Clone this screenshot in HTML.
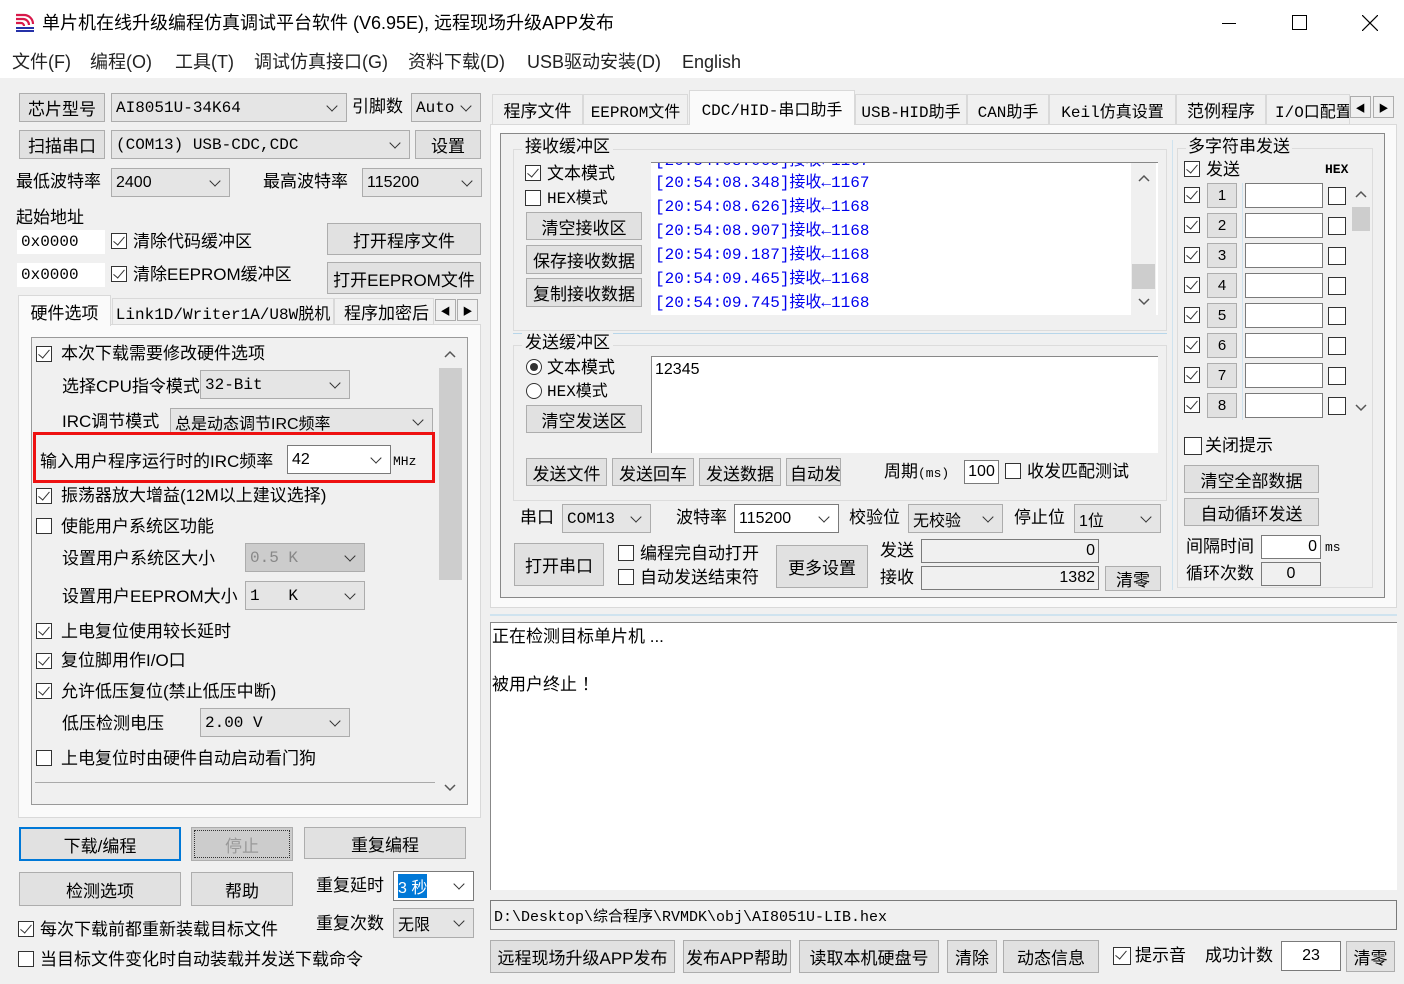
<!DOCTYPE html>
<html><head><meta charset="utf-8">
<style>
*{margin:0;padding:0;box-sizing:border-box}
body{width:1404px;height:984px;background:#f0f0f0;position:relative;overflow:hidden;font-family:"Liberation Sans","Noto Sans CJK SC",sans-serif;font-size:17px;color:#000}
.a{position:absolute}
.t{position:absolute;line-height:24px;white-space:nowrap}
.b{position:absolute;background:#e1e1e1;border:1px solid #adadad;display:flex;align-items:center;justify-content:center;white-space:nowrap}
.c{position:absolute;background:#e5e5e5;border:1px solid #acacac;display:flex;align-items:center;padding-left:4px;white-space:nowrap;font-size:16px}
.c::after{content:"";position:absolute;right:10px;top:50%;margin-top:-6px;width:7px;height:7px;border-right:1.5px solid #333;border-bottom:1.5px solid #333;transform:rotate(45deg)}
.w{background:#fff;border-color:#7a7a7a}
.e{position:absolute;background:#fff;border:1px solid #7a7a7a;display:flex;align-items:center;padding:0 3px;white-space:nowrap;font-size:16px}
.cb{position:absolute;width:16px;height:16px;background:#fff;border:1px solid #333}
.cb.k::after{content:"";position:absolute;left:4px;top:0px;width:5px;height:10px;border-right:1.5px solid #333;border-bottom:1.5px solid #333;transform:rotate(40deg)}
.rd{position:absolute;width:16px;height:16px;border-radius:50%;background:#fff;border:1px solid #333}
.m{font-family:"Liberation Mono","Noto Sans CJK SC",monospace}
.blue{color:#0000ee}
.tab{position:absolute;background:#f0f0f0;border:1px solid #d9d9d9;display:flex;align-items:center;justify-content:center;white-space:nowrap}
.grp{position:absolute;border:1px solid #dcdcdc}
</style></head><body>
<!-- title -->
<div class="a" style="left:0;top:0;width:1404px;height:47px;background:#fff"></div>
<svg class="a" style="left:14px;top:12px" width="24" height="22" viewBox="0 0 24 22"><path d="M2 3h8a9 9 0 0 1 9 9M2 7h7a6 6 0 0 1 6 6M2 11h5a3 3 0 0 1 3 3" stroke="#d8194a" stroke-width="2.2" fill="none"/><path d="M2 16h18M2 19h18" stroke="#2531a8" stroke-width="2"/></svg>
<div class="t" style="left:42px;top:11px;font-size:18px">单片机在线升级编程仿真调试平台软件 (V6.95E), 远程现场升级APP发布</div>
<div class="a" style="left:1222px;top:23px;width:14px;height:1px;background:#000"></div>
<div class="a" style="left:1292px;top:15px;width:15px;height:15px;border:1px solid #000"></div>
<svg class="a" style="left:1362px;top:15px" width="16" height="16"><path d="M0 0L16 16M16 0L0 16" stroke="#000" stroke-width="1.2"/></svg>
<!-- menu -->
<div class="a" style="left:0;top:47px;width:1404px;height:31px;background:#fff"></div>
<div class="t" style="left:12px;top:50px;font-size:18px;color:#222">文件(F)</div>
<div class="t" style="left:90px;top:50px;font-size:18px;color:#222">编程(O)</div>
<div class="t" style="left:175px;top:50px;font-size:18px;color:#222">工具(T)</div>
<div class="t" style="left:254px;top:50px;font-size:18px;color:#222">调试仿真接口(G)</div>
<div class="t" style="left:408px;top:50px;font-size:18px;color:#222">资料下载(D)</div>
<div class="t" style="left:527px;top:50px;font-size:18px;color:#222">USB驱动安装(D)</div>
<div class="t" style="left:682px;top:50px;font-size:18px;color:#222">English</div>

<!-- left top -->
<div class="b" style="left:19px;top:93px;width:86px;height:29px">芯片型号</div>
<div class="c m" style="left:111px;top:93px;width:236px;height:29px">AI8051U-34K64</div>
<div class="t" style="left:352px;top:95px">引脚数</div>
<div class="c m" style="left:411px;top:93px;width:70px;height:29px">Auto</div>
<div class="b" style="left:19px;top:130px;width:86px;height:29px">扫描串口</div>
<div class="c m" style="left:111px;top:130px;width:299px;height:29px">(COM13) USB-CDC,CDC</div>
<div class="b" style="left:415px;top:130px;width:66px;height:29px">设置</div>
<div class="t" style="left:16px;top:170px">最低波特率</div>
<div class="c" style="left:111px;top:168px;width:119px;height:29px">2400</div>
<div class="t" style="left:263px;top:170px">最高波特率</div>
<div class="c" style="left:362px;top:168px;width:120px;height:29px">115200</div>
<div class="t" style="left:16px;top:206px">起始地址</div>
<div class="e m" style="left:17px;top:230px;width:88px;height:24px;border-color:#fff">0x0000</div>
<div class="cb k" style="left:111px;top:233px"></div><div class="t" style="left:133px;top:230px">清除代码缓冲区</div>
<div class="b" style="left:327px;top:223px;width:154px;height:32px">打开程序文件</div>
<div class="e m" style="left:17px;top:263px;width:88px;height:24px;border-color:#fff">0x0000</div>
<div class="cb k" style="left:111px;top:266px"></div><div class="t" style="left:133px;top:263px">清除EEPROM缓冲区</div>
<div class="b" style="left:327px;top:262px;width:154px;height:32px">打开EEPROM文件</div>
<!-- left tabs -->
<div class="a" style="left:18px;top:324px;width:463px;height:494px;background:#fafafa;border:1px solid #d9d9d9"></div>
<div class="tab" style="left:18px;top:295px;width:93px;height:31px;background:#fafafa;border-bottom:none">硬件选项</div>
<div class="tab m" style="left:112px;top:298px;width:222px;height:27px;font-size:16px">Link1D/Writer1A/U8W脱机</div>
<div class="tab" style="left:334px;top:298px;width:100px;height:27px;justify-content:flex-start;padding-left:9px;overflow:hidden">程序加密后</div>
<div class="b" style="left:435px;top:299px;width:21px;height:22px;font-size:10px;background:#f0f0f0">◀</div>
<div class="b" style="left:457px;top:299px;width:21px;height:22px;font-size:10px;background:#f0f0f0">▶</div>
<div class="a" style="left:31px;top:337px;width:437px;height:468px;border:1px solid #999;background:#f0f0f0"></div>
<div class="a" style="left:439px;top:368px;width:23px;height:212px;background:#cdcdcd"></div>
<svg class="a" style="left:443px;top:349px" width="14" height="10"><path d="M2 8L7 3L12 8" stroke="#555" stroke-width="1.5" fill="none"/></svg>
<svg class="a" style="left:443px;top:783px" width="14" height="10"><path d="M2 2L7 7L12 2" stroke="#555" stroke-width="1.5" fill="none"/></svg>
<div class="cb k" style="left:36px;top:346px"></div><div class="t" style="left:61px;top:342px">本次下载需要修改硬件选项</div>
<div class="t" style="left:62px;top:375px">选择CPU指令模式</div>
<div class="c m" style="left:200px;top:370px;width:150px;height:29px">32-Bit</div>
<div class="t" style="left:62px;top:410px;height:22px;overflow:hidden">IRC调节模式</div>
<div class="c" style="left:170px;top:408px;width:263px;height:27px;overflow:hidden">总是动态调节IRC频率</div>
<div class="a" style="left:33px;top:432px;width:402px;height:51px;border:3px solid #ee1111;background:#f0f0f0"></div>
<div class="t" style="left:40px;top:450px">输入用户程序运行时的IRC频率</div>
<div class="c w" style="left:287px;top:445px;width:104px;height:29px">42</div>
<div class="t m" style="left:393px;top:450px;font-size:13px">MHz</div>
<div class="cb k" style="left:36px;top:488px"></div><div class="t" style="left:61px;top:484px">振荡器放大增益(12M以上建议选择)</div>
<div class="cb" style="left:36px;top:518px"></div><div class="t" style="left:61px;top:515px">使能用户系统区功能</div>
<div class="t" style="left:62px;top:547px">设置用户系统区大小</div>
<div class="c m" style="left:245px;top:543px;width:120px;height:29px;background:#ccc;color:#888">0.5 K</div>
<div class="t" style="left:62px;top:585px">设置用户EEPROM大小</div>
<div class="c m" style="left:245px;top:581px;width:120px;height:29px">1&nbsp;&nbsp;&nbsp;K</div>
<div class="cb k" style="left:36px;top:623px"></div><div class="t" style="left:61px;top:620px">上电复位使用较长延时</div>
<div class="cb k" style="left:36px;top:653px"></div><div class="t" style="left:61px;top:649px">复位脚用作I/O口</div>
<div class="cb k" style="left:36px;top:683px"></div><div class="t" style="left:61px;top:680px">允许低压复位(禁止低压中断)</div>
<div class="t" style="left:62px;top:712px">低压检测电压</div>
<div class="c m" style="left:200px;top:708px;width:150px;height:29px">2.00 V</div>
<div class="cb" style="left:36px;top:750px"></div><div class="t" style="left:61px;top:747px">上电复位时由硬件自动启动看门狗</div>
<div class="a" style="left:35px;top:782px;width:400px;height:1px;background:#aaa"></div>
<!-- left bottom -->
<div class="b" style="left:19px;top:827px;width:162px;height:34px;border:2px solid #0078d7">下载/编程</div>
<div class="b" style="left:191px;top:827px;width:102px;height:34px;color:#999;background:#ccc;outline:1px dotted #333;outline-offset:-4px">停止</div>
<div class="b" style="left:304px;top:827px;width:162px;height:32px">重复编程</div>
<div class="b" style="left:19px;top:872px;width:162px;height:34px">检测选项</div>
<div class="b" style="left:191px;top:872px;width:102px;height:34px">帮助</div>
<div class="t" style="left:316px;top:874px">重复延时</div>
<div class="c w" style="left:393px;top:871px;width:81px;height:30px"><span style="background:#0078d7;color:#fff">3 秒</span></div>
<div class="cb k" style="left:18px;top:921px"></div><div class="t" style="left:40px;top:918px">每次下载前都重新装载目标文件</div>
<div class="t" style="left:316px;top:912px">重复次数</div>
<div class="c" style="left:393px;top:908px;width:81px;height:30px">无限</div>
<div class="cb" style="left:18px;top:951px"></div><div class="t" style="left:40px;top:948px">当目标文件变化时自动装载并发送下载命令</div>

<!-- right tabs -->
<div class="a" style="left:490px;top:124px;width:907px;height:484px;background:#fafafa;border:1px solid #d9d9d9"></div>
<div class="tab" style="left:492px;top:94px;width:91px;height:31px">程序文件</div>
<div class="tab m" style="left:583px;top:94px;width:105px;height:31px;font-size:16px">EEPROM文件</div>
<div class="tab m" style="left:689px;top:90px;width:166px;height:35px;background:#fafafa;border-bottom:none;font-size:16px">CDC/HID-串口助手</div>
<div class="tab m" style="left:855px;top:94px;width:112px;height:31px;font-size:16px">USB-HID助手</div>
<div class="tab m" style="left:967px;top:94px;width:82px;height:31px;font-size:16px">CAN助手</div>
<div class="tab m" style="left:1049px;top:94px;width:127px;height:31px;font-size:16px">Keil仿真设置</div>
<div class="tab" style="left:1176px;top:94px;width:90px;height:31px">范例程序</div>
<div class="tab m" style="left:1266px;top:94px;width:84px;height:31px;overflow:hidden;justify-content:flex-start;padding-left:8px;font-size:16px">I/O口配置</div>
<div class="b" style="left:1350px;top:96px;width:21px;height:22px;font-size:10px;background:#f0f0f0">◀</div>
<div class="b" style="left:1373px;top:96px;width:21px;height:22px;font-size:10px;background:#f0f0f0">▶</div>
<div class="a" style="left:500px;top:133px;width:885px;height:465px;border:1px solid #888;background:#f0f0f0"></div>
<!-- recv -->
<div class="grp" style="left:513px;top:149px;width:654px;height:182px"></div>
<div class="t" style="left:522px;top:135px;background:#f0f0f0;padding:0 3px">接收缓冲区</div>
<div class="cb k" style="left:525px;top:165px"></div><div class="t" style="left:547px;top:162px">文本模式</div>
<div class="cb" style="left:525px;top:190px"></div><div class="t m" style="left:547px;top:187px;font-size:16px">HEX模式</div>
<div class="b" style="left:526px;top:212px;width:116px;height:28px">清空接收区</div>
<div class="b" style="left:526px;top:245px;width:116px;height:29px">保存接收数据</div>
<div class="b" style="left:526px;top:278px;width:116px;height:29px">复制接收数据</div>
<div class="a" style="left:651px;top:162px;width:507px;height:153px;background:#fff;border-top:1px solid #888;overflow:hidden">
<div class="t blue m" style="left:4px;top:-14px;font-size:16px">[20:54:08.069]接收←1167</div>
<div class="t blue m" style="left:4px;top:8px;font-size:16px">[20:54:08.348]接收←1167</div>
<div class="t blue m" style="left:4px;top:32px;font-size:16px">[20:54:08.626]接收←1168</div>
<div class="t blue m" style="left:4px;top:56px;font-size:16px">[20:54:08.907]接收←1168</div>
<div class="t blue m" style="left:4px;top:80px;font-size:16px">[20:54:09.187]接收←1168</div>
<div class="t blue m" style="left:4px;top:104px;font-size:16px">[20:54:09.465]接收←1168</div>
<div class="t blue m" style="left:4px;top:128px;font-size:16px">[20:54:09.745]接收←1168</div>
<div class="a" style="left:480px;top:0;width:25px;height:153px;background:#f0f0f0"></div>
<div class="a" style="left:481px;top:101px;width:23px;height:25px;background:#cdcdcd"></div>
<svg class="a" style="left:486px;top:10px" width="14" height="10"><path d="M2 8L7 3L12 8" stroke="#555" stroke-width="1.5" fill="none"/></svg>
<svg class="a" style="left:486px;top:134px" width="14" height="10"><path d="M2 2L7 7L12 2" stroke="#555" stroke-width="1.5" fill="none"/></svg>
</div>
<div class="a" style="left:513px;top:333px;width:654px;height:1px;background:#b7d6ea"></div>
<!-- send -->
<div class="grp" style="left:513px;top:345px;width:654px;height:156px"></div>
<div class="t" style="left:522px;top:331px;background:#f0f0f0;padding:0 3px">发送缓冲区</div>
<div class="rd" style="left:526px;top:359px"><div class="a" style="left:3px;top:3px;width:8px;height:8px;border-radius:50%;background:#333"></div></div><div class="t" style="left:547px;top:356px">文本模式</div>
<div class="rd" style="left:526px;top:383px"></div><div class="t m" style="left:547px;top:380px;font-size:16px">HEX模式</div>
<div class="b" style="left:526px;top:405px;width:116px;height:28px">清空发送区</div>
<div class="a" style="left:651px;top:356px;width:507px;height:97px;background:#fff;border-top:1px solid #888;border-left:1px solid #888"></div>
<div class="t" style="left:655px;top:358px;font-size:16px">12345</div>
<div class="b" style="left:526px;top:458px;width:81px;height:28px">发送文件</div>
<div class="b" style="left:612px;top:458px;width:82px;height:28px">发送回车</div>
<div class="b" style="left:699px;top:458px;width:82px;height:28px">发送数据</div>
<div class="b" style="left:786px;top:458px;width:55px;height:28px;justify-content:flex-start;padding-left:3px;overflow:hidden">自动发送</div>
<div class="t" style="left:884px;top:460px">周期<span class="m" style="font-size:13px">(ms)</span></div>
<div class="e" style="left:964px;top:460px;width:35px;height:24px;justify-content:center">100</div>
<div class="cb" style="left:1005px;top:463px"></div><div class="t" style="left:1027px;top:460px">收发匹配测试</div>
<!-- serial -->
<div class="t" style="left:520px;top:506px">串口</div>
<div class="c m" style="left:562px;top:504px;width:89px;height:29px">COM13</div>
<div class="t" style="left:676px;top:506px">波特率</div>
<div class="c w" style="left:734px;top:504px;width:105px;height:29px">115200</div>
<div class="t" style="left:849px;top:506px">校验位</div>
<div class="c" style="left:908px;top:504px;width:95px;height:29px">无校验</div>
<div class="t" style="left:1014px;top:506px">停止位</div>
<div class="c" style="left:1074px;top:504px;width:87px;height:29px">1位</div>
<div class="b" style="left:514px;top:543px;width:90px;height:43px">打开串口</div>
<div class="cb" style="left:618px;top:545px"></div><div class="t" style="left:640px;top:542px">编程完自动打开</div>
<div class="cb" style="left:618px;top:569px"></div><div class="t" style="left:640px;top:566px">自动发送结束符</div>
<div class="b" style="left:776px;top:545px;width:92px;height:43px">更多设置</div>
<div class="t" style="left:880px;top:539px">发送</div>
<div class="t" style="left:880px;top:566px">接收</div>
<div class="e" style="left:921px;top:539px;width:178px;height:24px;justify-content:flex-end;background:#f0f0f0">0</div>
<div class="e" style="left:921px;top:566px;width:178px;height:24px;justify-content:flex-end;background:#f0f0f0">1382</div>
<div class="b" style="left:1105px;top:566px;width:56px;height:25px">清零</div>
<!-- multi string -->
<div class="a" style="left:1172px;top:140px;width:1px;height:450px;background:#cfe3ef"></div>
<div class="grp" style="left:1177px;top:148px;width:196px;height:440px"></div>
<div class="t" style="left:1186px;top:135px;background:#f0f0f0;padding:0 2px">多字符串发送</div>
<div class="cb k" style="left:1184px;top:161px"></div><div class="t" style="left:1206px;top:158px">发送</div>
<div class="t m" style="left:1325px;top:158px;font-size:13px;font-weight:bold">HEX</div>
<div class="a" style="left:1242px;top:183px;width:1px;height:237px;background:#cfe3ef"></div>
<div class="a" style="left:1352px;top:183px;width:18px;height:237px;background:#f0f0f0"></div>
<div class="a" style="left:1352px;top:207px;width:18px;height:24px;background:#cdcdcd"></div>
<svg class="a" style="left:1354px;top:189px" width="14" height="10"><path d="M2 8L7 3L12 8" stroke="#555" stroke-width="1.5" fill="none"/></svg>
<svg class="a" style="left:1354px;top:403px" width="14" height="10"><path d="M2 2L7 7L12 2" stroke="#555" stroke-width="1.5" fill="none"/></svg>

<div class="cb k" style="left:1184px;top:187px"></div><div class="b" style="left:1207px;top:183px;width:30px;height:25px;font-size:15px">1</div><div class="e" style="left:1245px;top:183px;width:78px;height:25px"></div><div class="cb" style="left:1328px;top:187px;width:18px;height:18px"></div>
<div class="cb k" style="left:1184px;top:217px"></div><div class="b" style="left:1207px;top:213px;width:30px;height:25px;font-size:15px">2</div><div class="e" style="left:1245px;top:213px;width:78px;height:25px"></div><div class="cb" style="left:1328px;top:217px;width:18px;height:18px"></div>
<div class="cb k" style="left:1184px;top:247px"></div><div class="b" style="left:1207px;top:243px;width:30px;height:25px;font-size:15px">3</div><div class="e" style="left:1245px;top:243px;width:78px;height:25px"></div><div class="cb" style="left:1328px;top:247px;width:18px;height:18px"></div>
<div class="cb k" style="left:1184px;top:277px"></div><div class="b" style="left:1207px;top:273px;width:30px;height:25px;font-size:15px">4</div><div class="e" style="left:1245px;top:273px;width:78px;height:25px"></div><div class="cb" style="left:1328px;top:277px;width:18px;height:18px"></div>
<div class="cb k" style="left:1184px;top:307px"></div><div class="b" style="left:1207px;top:303px;width:30px;height:25px;font-size:15px">5</div><div class="e" style="left:1245px;top:303px;width:78px;height:25px"></div><div class="cb" style="left:1328px;top:307px;width:18px;height:18px"></div>
<div class="cb k" style="left:1184px;top:337px"></div><div class="b" style="left:1207px;top:333px;width:30px;height:25px;font-size:15px">6</div><div class="e" style="left:1245px;top:333px;width:78px;height:25px"></div><div class="cb" style="left:1328px;top:337px;width:18px;height:18px"></div>
<div class="cb k" style="left:1184px;top:367px"></div><div class="b" style="left:1207px;top:363px;width:30px;height:25px;font-size:15px">7</div><div class="e" style="left:1245px;top:363px;width:78px;height:25px"></div><div class="cb" style="left:1328px;top:367px;width:18px;height:18px"></div>
<div class="cb k" style="left:1184px;top:397px"></div><div class="b" style="left:1207px;top:393px;width:30px;height:25px;font-size:15px">8</div><div class="e" style="left:1245px;top:393px;width:78px;height:25px"></div><div class="cb" style="left:1328px;top:397px;width:18px;height:18px"></div>
<div class="cb" style="left:1184px;top:437px;width:18px;height:18px"></div><div class="t" style="left:1205px;top:434px">关闭提示</div>
<div class="b" style="left:1184px;top:465px;width:135px;height:28px">清空全部数据</div>
<div class="b" style="left:1184px;top:498px;width:135px;height:28px">自动循环发送</div>
<div class="t" style="left:1186px;top:535px">间隔时间</div>
<div class="e" style="left:1261px;top:535px;width:60px;height:24px;justify-content:flex-end">0</div>
<div class="t m" style="left:1325px;top:536px;font-size:13px">ms</div>
<div class="t" style="left:1186px;top:562px">循环次数</div>
<div class="e" style="left:1261px;top:562px;width:60px;height:24px;justify-content:center;background:#f0f0f0">0</div>

<!-- log -->
<div class="a" style="left:490px;top:614px;width:907px;height:2px;background:#cfe3ef"></div>
<div class="a" style="left:490px;top:622px;width:907px;height:268px;background:#fff;border-top:1px solid #888;border-left:1px solid #888"></div>
<div class="t" style="left:492px;top:625px">正在检测目标单片机 ...</div>
<div class="t" style="left:492px;top:673px">被用户终止 ！</div>
<div class="e m" style="left:490px;top:900px;width:907px;height:30px;background:#f0f0f0;font-size:15px">D:\Desktop\综合程序\RVMDK\obj\AI8051U-LIB.hex</div>
<div class="b" style="left:490px;top:940px;width:185px;height:33px">远程现场升级APP发布</div>
<div class="b" style="left:683px;top:940px;width:108px;height:33px">发布APP帮助</div>
<div class="b" style="left:799px;top:940px;width:140px;height:33px">读取本机硬盘号</div>
<div class="b" style="left:947px;top:940px;width:50px;height:33px">清除</div>
<div class="b" style="left:1003px;top:940px;width:96px;height:33px">动态信息</div>
<div class="cb k" style="left:1113px;top:947px;width:18px;height:18px"></div><div class="t" style="left:1135px;top:944px">提示音</div>
<div class="t" style="left:1205px;top:944px">成功计数</div>
<div class="e" style="left:1281px;top:941px;width:60px;height:30px;justify-content:center">23</div>
<div class="b" style="left:1346px;top:941px;width:49px;height:31px">清零</div>
</body></html>
